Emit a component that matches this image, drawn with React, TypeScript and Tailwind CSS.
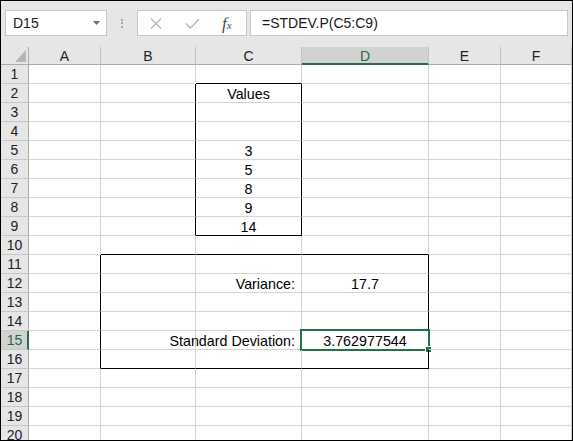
import React from "react";

type Box = { r1: number; r2: number; c1: number; c2: number };

const cols = ["A", "B", "C", "D", "E", "F"];
const widths = ["w-[72px]", "w-[95px]", "w-[106px]", "w-[127px]", "w-[72px]", "w-[71px]"];

const boxes: Box[] = [
  { r1: 2, r2: 9, c1: 2, c2: 2 },
  { r1: 11, r2: 16, c1: 1, c2: 3 },
];

type CellVal = { text: string; align: "center" | "right" };
const data: Record<string, CellVal> = {
  "2-2": { text: "Values", align: "center" },
  "5-2": { text: "3", align: "center" },
  "6-2": { text: "5", align: "center" },
  "7-2": { text: "8", align: "center" },
  "8-2": { text: "9", align: "center" },
  "9-2": { text: "14", align: "center" },
  "12-2": { text: "Variance:", align: "right" },
  "12-3": { text: "17.7", align: "center" },
  "15-2": { text: "Standard Deviation:", align: "right" },
  "15-3": { text: "3.762977544", align: "center" },
};

function rightBlack(r: number, c: number) {
  return boxes.some((b) => r >= b.r1 && r <= b.r2 && (c === b.c2 || c === b.c1 - 1));
}
function bottomBlack(r: number, c: number) {
  return boxes.some((b) => c >= b.c1 && c <= b.c2 && (r === b.r2 || r === b.r1 - 1));
}

function Toolbar() {
  return (
    <div className="flex h-[46px] shrink-0 bg-[#e6e6e6] pl-[4px] pt-[9px]">
      <div className="flex h-[26px] w-[102px] items-center border border-[#c6c6c6] bg-white pl-[7px] pr-[6px]">
        <span className="text-[14px] text-[#1a1a1a]">D15</span>
        <svg className="ml-auto" width="7" height="4" viewBox="0 0 7 4">
          <polygon points="0,0 7,0 3.5,4" fill="#707070" />
        </svg>
      </div>
      <div className="flex h-[26px] w-[30px] flex-col items-center justify-center gap-[1.5px]">
        <div className="h-[2px] w-[2px] bg-[#a8a8a8]" />
        <div className="h-[2px] w-[2px] bg-[#a8a8a8]" />
        <div className="h-[2px] w-[2px] bg-[#a8a8a8]" />
      </div>
      <div className="flex h-[26px] w-[110px] items-center border border-[#c6c6c6] bg-white pl-[12px]">
        <svg width="12" height="11" viewBox="0 0 12 11">
          <path d="M1 0.5 L11 10.5 M11 0.5 L1 10.5" stroke="#b8b8b8" strokeWidth="1.4" fill="none" />
        </svg>
        <svg className="ml-[23px]" width="15" height="11" viewBox="0 0 15 11">
          <path d="M1 5.5 L5.5 10 L14 1" stroke="#b8b8b8" strokeWidth="1.6" fill="none" />
        </svg>
        <span className="ml-[22px] font-['Liberation_Serif',serif] text-[17px] italic leading-none text-[#4a4a4a]">
          f<span className="text-[11px]">x</span>
        </span>
      </div>
      <div className="ml-[3px] flex h-[26px] w-[318px] items-center border border-[#c6c6c6] bg-white pl-[11px]">
        <span className="text-[14px] text-[#1a1a1a]">=STDEV.P(C5:C9)</span>
      </div>
    </div>
  );
}

function HeaderRow() {
  return (
    <div className="flex h-[18px] shrink-0">
      <div className="relative h-[18px] w-[28px] shrink-0 border-r border-b border-r-[#ababab] border-b-[#ababab] bg-[#e6e6e6]">
        <svg className="absolute right-[2px] bottom-[2px]" width="11" height="12" viewBox="0 0 11 12">
          <polygon points="11,0 11,12 0,12" fill="#b5b5b5" />
        </svg>
      </div>
      {cols.map((c, i) => {
        const sel = c === "D";
        return (
          <div
            key={c}
            className={`flex h-[18px] shrink-0 items-center justify-center border-r border-r-[#c3c3c3] text-[14px] leading-none ${widths[i]} ${
              sel
                ? "border-b-2 border-b-[#217346] bg-[#d2d2d2] pt-[1px] text-[#1e6b43]"
                : "border-b border-b-[#ababab] bg-[#e6e6e6] text-[#222]"
            }`}
          >
            {c}
          </div>
        );
      })}
    </div>
  );
}

function Row({ r }: { r: number }) {
  const selRow = r === 15;
  return (
    <div className="flex h-[19px] shrink-0">
      <div
        className={`flex h-[19px] w-[28px] shrink-0 items-center justify-center border-b border-b-[#c8c8c8] text-[14px] leading-none ${
          selRow
            ? "border-r-2 border-r-[#217346] bg-[#d2d2d2] pl-[1px] text-[#1e6b43]"
            : "border-r border-r-[#ababab] bg-[#e6e6e6] text-[#222]"
        }`}
      >
        {r}
      </div>
      {cols.map((c, ci) => {
        const v = data[`${r}-${ci}`];
        const sel = r === 15 && ci === 3;
        return (
          <div
            key={c}
            className={`relative flex h-[19px] shrink-0 items-end whitespace-nowrap border-r border-b text-[14.3px] leading-[16px] text-black ${widths[ci]} ${
              rightBlack(r, ci) ? "border-r-black" : "border-r-[#d4d4d4]"
            } ${bottomBlack(r, ci) ? "border-b-black" : "border-b-[#d4d4d4]"} ${
              v && v.align === "right" ? "justify-end pr-[6px]" : "justify-center"
            }`}
          >
            {v && <span>{v.text}</span>}
            {sel && (
              <>
                <div className="pointer-events-none absolute -inset-[2px] border-2 border-[#217346]" />
                <div className="absolute -right-[4px] -bottom-[4px] h-[7px] w-[7px] border border-white bg-[#217346]" />
              </>
            )}
          </div>
        );
      })}
    </div>
  );
}

export default function App() {
  const rows = Array.from({ length: 20 }, (_, i) => i + 1);
  return (
    <div className="flex h-[441px] w-[573px] flex-col overflow-hidden border border-black bg-white font-['Liberation_Sans',Arial,sans-serif]">
      <Toolbar />
      <HeaderRow />
      <div className="flex flex-col">
        {rows.map((r) => (
          <Row key={r} r={r} />
        ))}
      </div>
    </div>
  );
}
